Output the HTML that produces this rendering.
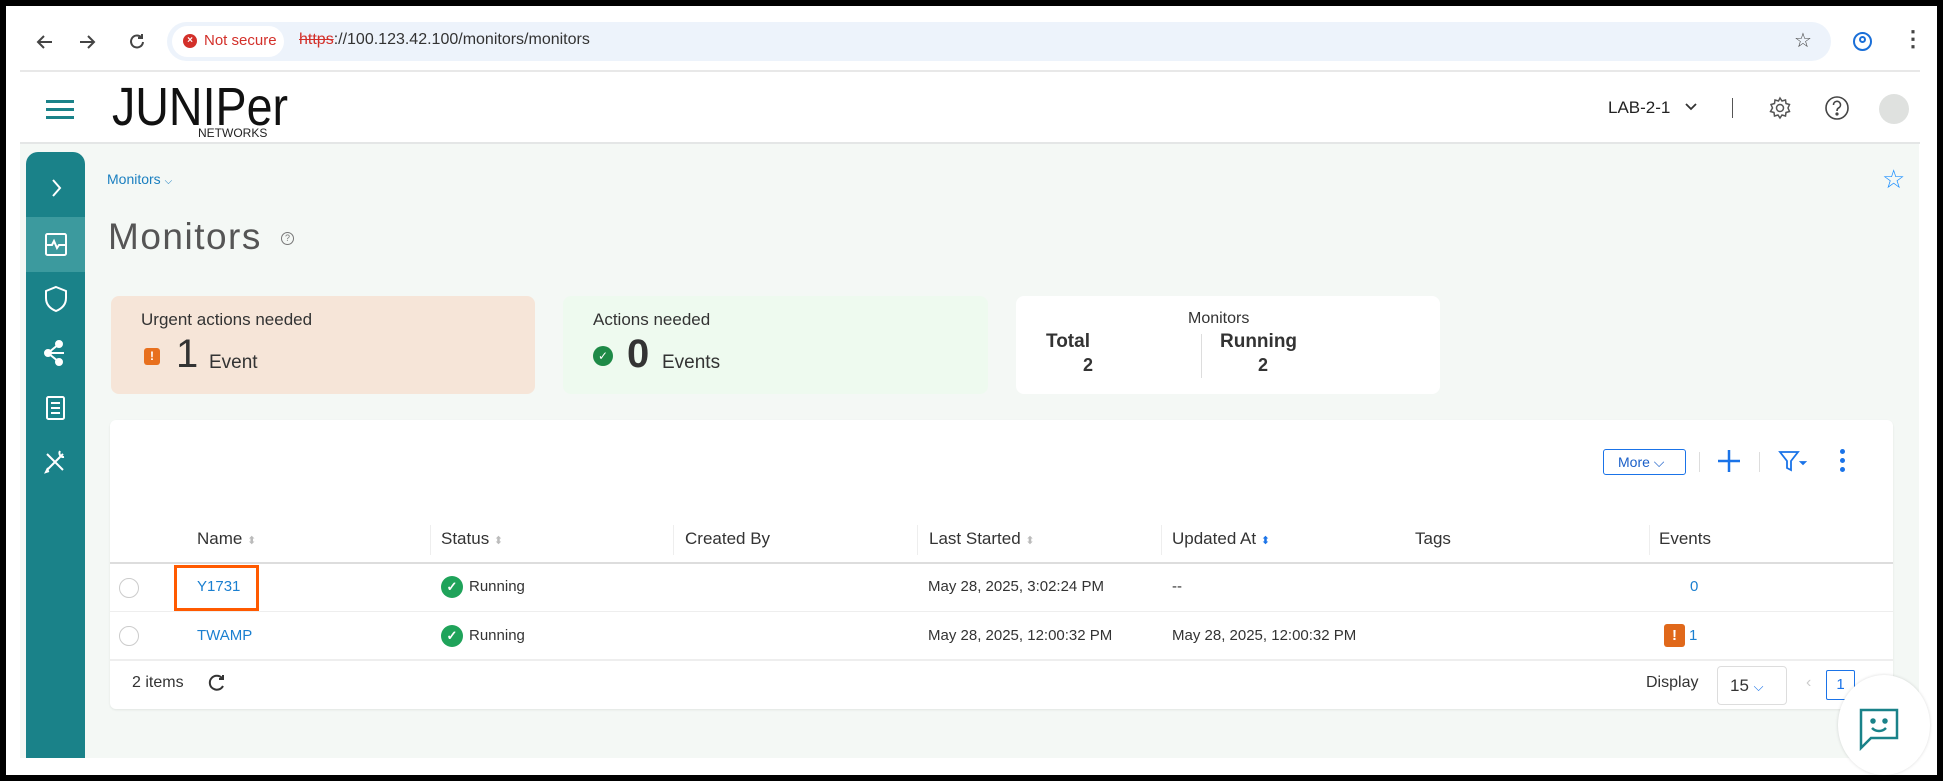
<!DOCTYPE html>
<html><head><meta charset="utf-8"><style>
*{box-sizing:border-box;margin:0;padding:0}
body{width:1943px;height:781px;background:#000;font-family:"Liberation Sans",sans-serif;position:relative;overflow:hidden}
.abs{position:absolute}
#win{position:absolute;left:6px;top:6px;width:1931px;height:769px;background:#fff}
.t{position:absolute;white-space:nowrap}
</style></head><body>
<div id="win"></div>
<!-- browser bar -->
<svg class="abs" style="left:34px;top:31px" width="120" height="22" viewBox="0 0 120 22" fill="none" stroke="#444" stroke-width="2">
<path d="M18 11H4M10 5L4 11l6 6"/><path d="M46 11h14M54 5l6 6-6 6"/>
<path d="M107 6a6 6 0 1 0 2 5"/><path d="M108 3v4h-4"/></svg>
<div class="abs" style="left:167px;top:22px;width:1664px;height:39px;border-radius:20px;background:#edf3fb"></div>
<div class="abs" style="left:172px;top:26px;width:112px;height:31px;border-radius:16px;background:#fff"></div>
<div class="abs" style="left:183px;top:34px;width:14px;height:14px;border-radius:50%;background:#d3302a;color:#fff;font-size:10px;line-height:14px;text-align:center;font-weight:bold">×</div>
<div class="t" style="left:204px;top:32px;font-size:15px;color:#d3302a">Not secure</div>
<div class="t" style="left:299px;top:31px;font-size:16px;color:#333"><span style="color:#d3302a;text-decoration:line-through">https</span>://100.123.42.100/monitors/monitors</div>
<div class="t" style="left:1794px;top:28px;font-size:20px;color:#444">☆</div>
<div class="abs" style="left:1853px;top:32px;width:19px;height:19px;border:2px solid #1a6fd8;border-radius:50%"></div>
<div class="abs" style="left:1859px;top:36px;width:7px;height:7px;border:2px solid #1a6fd8;border-radius:50%"></div>
<div class="t" style="left:1902px;top:26px;font-size:22px;color:#444;font-weight:bold">⋮</div>
<div class="abs" style="left:20px;top:70px;width:1900px;height:2px;background:#e8e8e8"></div>
<!-- header -->
<div class="abs" style="left:20px;top:142px;width:1900px;height:2px;background:#e4e6e6"></div>
<div class="abs" style="left:46px;top:100px;width:28px;height:3px;background:#1a8289;box-shadow:0 8px 0 #1a8289,0 16px 0 #1a8289"></div>
<svg class="abs" style="left:112px;top:80px" width="180" height="58">
<text x="0" y="45" font-family="Liberation Sans Narrow, Liberation Sans, sans-serif" font-size="54" fill="#111" textLength="176" lengthAdjust="spacingAndGlyphs">JUNIPer</text>
<text x="86" y="57" font-family="Liberation Sans, sans-serif" font-size="12" fill="#222">NETWORKS</text></svg>
<div class="t" style="left:1608px;top:98px;font-size:17px;color:#222">LAB-2-1</div>
<svg class="abs" style="left:1684px;top:102px" width="14" height="10"><path d="M2 2l5 5 5-5" stroke="#333" stroke-width="1.8" fill="none"/></svg>
<div class="abs" style="left:1732px;top:98px;width:1px;height:20px;background:#555"></div>
<svg class="abs" style="left:1768px;top:96px" width="24" height="24" viewBox="0 0 24 24" fill="none" stroke="#555" stroke-width="1.5"><circle cx="12" cy="12" r="3.5"/><path d="M12 2l2 3 3.5-1 .5 3.5 3.5 1-1.5 3.5 1.5 3.5-3.5 1-.5 3.5-3.5-1-2 3-2-3-3.5 1-.5-3.5-3.5-1L4.5 12 3 8.5l3.5-1L7 4l3.5 1z"/></svg>
<svg class="abs" style="left:1824px;top:95px" width="26" height="26" viewBox="0 0 26 26" fill="none" stroke="#444" stroke-width="1.6"><circle cx="13" cy="13" r="11"/><path d="M9.5 10a3.5 3.5 0 1 1 5 3c-1.2.6-1.5 1.3-1.5 3"/><circle cx="13" cy="19" r=".8" fill="#444"/></svg>
<div class="abs" style="left:1879px;top:94px;width:30px;height:30px;border-radius:50%;background:#dfe1df"></div>
<!-- content bg -->
<div class="abs" style="left:20px;top:144px;width:1899px;height:614px;background:#f4f8f5"></div>
<!-- sidebar -->
<div class="abs" style="left:26px;top:152px;width:59px;height:606px;background:#1a8289;border-radius:12px 12px 0 0"></div>
<div class="abs" style="left:26px;top:217px;width:59px;height:55px;background:#3c9a9e"></div>
<svg class="abs" style="left:26px;top:152px" width="59" height="330" viewBox="0 0 59 330" fill="none" stroke="#fff" stroke-width="2">
<path d="M27 28l7 8-7 8"/>
<rect x="20" y="82" width="20" height="21" rx="1.5"/><path d="M20 93h6l2-4 3 7 2-3h7"/>
<path d="M30 135l10 4v7c0 7-5 11-10 13-5-2-10-6-10-13v-7z"/>
<circle cx="22" cy="201" r="3" fill="#fff"/><circle cx="33" cy="192" r="3" fill="#fff"/><circle cx="33" cy="210" r="3" fill="#fff"/><path d="M22 201l11-9M22 201h16M22 201l11 9"/>
<rect x="21" y="245" width="17" height="22" rx="1.5"/><path d="M25 251h9M25 256h9M25 261h9"/>
<path d="M21 302l16 16M37 302l-16 16M34 299a4 4 0 0 0 4 6M22 316l-2 4 3 -1"/></svg>
<!-- breadcrumb + title -->
<div class="t" style="left:107px;top:171px;font-size:14px;color:#1a7fc0">Monitors <span style="font-size:10px">⌵</span></div>
<div class="t" style="left:1882px;top:164px;font-size:26px;color:#1e90ff">☆</div>
<div class="t" style="left:108px;top:216px;font-size:37px;color:#555;letter-spacing:1.5px">Monitors</div>
<div class="abs" style="left:281px;top:232px;width:13px;height:13px;border:1.5px solid #777;border-radius:50%;font-size:9px;line-height:10px;text-align:center;color:#777">?</div>
<!-- cards -->
<div class="abs" style="left:111px;top:296px;width:424px;height:98px;background:#f6e5d8;border-radius:8px"></div>
<div class="t" style="left:141px;top:310px;font-size:17px;color:#333">Urgent actions needed</div>
<div class="abs" style="left:144px;top:348px;width:16px;height:17px;background:#e8701e;border-radius:3px;color:#fff;font-size:12px;font-weight:bold;text-align:center;line-height:17px">!</div>
<div class="t" style="left:176px;top:332px;font-size:40px;color:#333">1</div>
<div class="t" style="left:209px;top:352px;font-size:19px;color:#333">Event</div>
<div class="abs" style="left:563px;top:296px;width:425px;height:98px;background:#eefaef;border-radius:8px"></div>
<div class="t" style="left:593px;top:310px;font-size:17px;color:#333">Actions needed</div>
<div class="abs" style="left:593px;top:346px;width:20px;height:20px;background:#1e8a47;border-radius:50%;color:#fff;font-size:12px;text-align:center;line-height:20px">✓</div>
<div class="t" style="left:627px;top:332px;font-size:40px;color:#333;font-weight:bold">0</div>
<div class="t" style="left:662px;top:352px;font-size:19px;color:#333">Events</div>
<div class="abs" style="left:1016px;top:296px;width:424px;height:98px;background:#fff;border-radius:8px"></div>
<div class="t" style="left:1188px;top:310px;font-size:16px;color:#333">Monitors</div>
<div class="t" style="left:1046px;top:331px;font-size:19px;color:#333;font-weight:bold">Total</div>
<div class="t" style="left:1083px;top:355px;font-size:18px;color:#333;font-weight:bold">2</div>
<div class="abs" style="left:1201px;top:334px;width:1px;height:44px;background:#ddd"></div>
<div class="t" style="left:1220px;top:331px;font-size:19px;color:#333;font-weight:bold">Running</div>
<div class="t" style="left:1258px;top:355px;font-size:18px;color:#333;font-weight:bold">2</div>
<!-- table -->
<div class="abs" style="left:110px;top:420px;width:1783px;height:289px;background:#fff;border-radius:6px;box-shadow:0 1px 2px rgba(0,0,0,.08)"></div>
<div class="abs" style="left:1603px;top:449px;width:83px;height:26px;border:1.5px solid #1a73e8;border-radius:3px;color:#1a5fc8;font-size:14px;padding:4px 0 0 14px">More ⌵</div>
<div class="abs" style="left:1699px;top:452px;width:1px;height:20px;background:#ddd"></div>
<div class="abs" style="left:1759px;top:452px;width:1px;height:20px;background:#ddd"></div>
<svg class="abs" style="left:1716px;top:448px" width="26" height="26"><path d="M13 2v22M2 13h22" stroke="#1a73e8" stroke-width="2.5"/></svg>
<svg class="abs" style="left:1778px;top:449px" width="30" height="24" fill="none" stroke="#1a73e8" stroke-width="1.8"><path d="M2 3h18l-7 9v9l-4-2v-7z"/><path d="M23 13l2 2 2-2z" fill="#1a73e8"/></svg>
<div class="abs" style="left:1840px;top:449px;width:5px;height:5px;background:#1a73e8;border-radius:50%;box-shadow:0 9px 0 #1a73e8,0 18px 0 #1a73e8"></div>
<!-- headers -->
<div style="font-size:17px;color:#333">
<div class="t" style="left:197px;top:529px">Name <span style="color:#bbb;font-size:11px">⬍</span></div>
<div class="t" style="left:441px;top:529px">Status <span style="color:#bbb;font-size:11px">⬍</span></div>
<div class="t" style="left:685px;top:529px">Created By</div>
<div class="t" style="left:929px;top:529px">Last Started <span style="color:#bbb;font-size:11px">⬍</span></div>
<div class="t" style="left:1172px;top:529px">Updated At <span style="color:#1a73e8;font-size:11px">⬍</span></div>
<div class="t" style="left:1415px;top:529px">Tags</div>
<div class="t" style="left:1659px;top:529px">Events</div>
</div>
<div class="abs" style="left:430px;top:525px;width:1px;height:30px;background:#eee"></div>
<div class="abs" style="left:673px;top:525px;width:1px;height:30px;background:#eee"></div>
<div class="abs" style="left:917px;top:525px;width:1px;height:30px;background:#eee"></div>
<div class="abs" style="left:1161px;top:525px;width:1px;height:30px;background:#eee"></div>
<div class="abs" style="left:1649px;top:525px;width:1px;height:30px;background:#eee"></div>
<div class="abs" style="left:110px;top:562px;width:1783px;height:2px;background:#ddd"></div>
<div class="abs" style="left:110px;top:611px;width:1783px;height:1px;background:#eee"></div>
<div class="abs" style="left:110px;top:659px;width:1783px;height:2px;background:#eee"></div>
<div style="font-size:15px;color:#333">
<div class="abs" style="left:119px;top:578px;width:20px;height:20px;border:1px solid #ccc;border-radius:50%"></div>
<div class="abs" style="left:119px;top:626px;width:20px;height:20px;border:1px solid #ccc;border-radius:50%"></div>
<div class="abs" style="left:174px;top:565px;width:85px;height:46px;border:3px solid #ff5a00"></div>
<div class="t" style="left:197px;top:578px;color:#1a7fd0">Y1731</div>
<div class="t" style="left:197px;top:627px;color:#1a7fd0">TWAMP</div>
<div class="abs" style="left:441px;top:576px;width:22px;height:22px;background:#1fa35a;border-radius:50%;color:#fff;font-size:13px;text-align:center;line-height:22px;font-weight:bold">✓</div>
<div class="abs" style="left:441px;top:625px;width:22px;height:22px;background:#1fa35a;border-radius:50%;color:#fff;font-size:13px;text-align:center;line-height:22px;font-weight:bold">✓</div>
<div class="t" style="left:469px;top:578px">Running</div>
<div class="t" style="left:469px;top:627px">Running</div>
<div class="t" style="left:928px;top:578px">May 28, 2025, 3:02:24 PM</div>
<div class="t" style="left:928px;top:627px">May 28, 2025, 12:00:32 PM</div>
<div class="t" style="left:1172px;top:578px">--</div>
<div class="t" style="left:1172px;top:627px">May 28, 2025, 12:00:32 PM</div>
<div class="t" style="left:1690px;top:578px;color:#1a7fd0">0</div>
<div class="abs" style="left:1664px;top:624px;width:21px;height:23px;background:#e0681a;border-radius:3px;color:#fff;font-weight:bold;text-align:center;line-height:23px">!</div>
<div class="t" style="left:1689px;top:627px;color:#1a7fd0">1</div>
<div class="t" style="left:132px;top:674px;font-size:16px">2 items</div>
<svg class="abs" style="left:207px;top:673px" width="20" height="20" fill="none" stroke="#333" stroke-width="2"><path d="M15 5a7 7 0 1 0 1 8"/><path d="M16 2v4h-4"/></svg>
<div class="t" style="left:1646px;top:674px;font-size:16px">Display</div>
<div class="abs" style="left:1717px;top:666px;width:70px;height:39px;border:1px solid #ddd;border-radius:4px;font-size:17px;padding:9px 0 0 12px">15 <span style="color:#1a73e8;font-size:13px">⌵</span></div>
<div class="t" style="left:1806px;top:674px;color:#ccc;font-size:16px">‹</div>
<div class="abs" style="left:1826px;top:670px;width:29px;height:30px;border:1.5px solid #1a73e8;border-radius:2px;color:#1a73e8;text-align:center;line-height:28px">1</div>
</div>
<!-- chat bubble -->
<div class="abs" style="left:1838px;top:675px;width:92px;height:100px;border-radius:50%;background:#fff;box-shadow:0 0 3px rgba(0,0,0,.15)"></div>
<svg class="abs" style="left:1857px;top:706px" width="44" height="46" fill="none" stroke="#1a8289" stroke-width="2.5"><path d="M4 4h36v28H14L4 42z"/><circle cx="16" cy="15" r="1.5" fill="#1a8289"/><circle cx="28" cy="15" r="1.5" fill="#1a8289"/><path d="M15 22c4 4 10 4 14 0"/></svg>
</body></html>
